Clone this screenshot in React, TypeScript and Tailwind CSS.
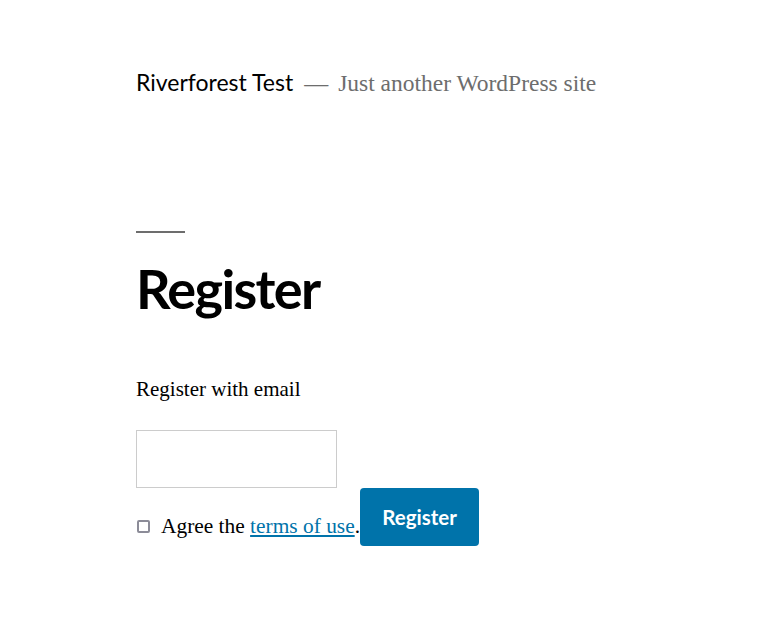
import React from "react";

export default function App() {
  return (
    <div className="min-h-[633px] bg-white pl-[136px]">
      <header className="flex items-baseline pt-[66px]">
        <span
          className="text-[23px] text-[#000] leading-[32px]"
          style={{ fontFamily: "Lato, 'Open Sans', sans-serif" }}
        >
          Riverforest Test
        </span>
        <span
          className="ml-[11px] text-[24px] text-[#6d6d6d] leading-[32px]"
          style={{ fontFamily: "'Liberation Serif', serif" }}
        >
          —
        </span>
        <span
          className="ml-[10px] text-[23.5px] text-[#6d6d6d] leading-[32px]"
          style={{ fontFamily: "'Liberation Serif', serif" }}
        >
          Just another WordPress site
        </span>
      </header>

      <div className="mt-[132px] h-[2px] w-[49px] bg-[#6d6d6d]" />

      <h1
        className="mt-[24px] text-[54px] font-bold leading-[64px] tracking-[-0.03em] text-[#000]"
        style={{ fontFamily: "Lato, 'Open Sans', sans-serif" }}
      >
        Register
      </h1>

      <p
        className="mt-[54px] text-[21px] leading-[28px] text-[#000]"
        style={{ fontFamily: "'Liberation Serif', serif" }}
      >
        Register with email
      </p>

      <input
        type="email"
        aria-label="Email"
        className="mt-[27px] block h-[58px] w-[201px] border border-[#cccccc] bg-white outline-none"
      />

      <div className="flex items-end">
        <label
          className="mb-[8px] flex items-center text-[21.4px] leading-[24px] text-[#000]"
          style={{ fontFamily: "'Liberation Serif', serif" }}
        >
          <span className="ml-[1px] mr-[11px] inline-block h-[13px] w-[13px] rounded-[2px] border-2 border-[#8c8c98]" />
          <span>
            Agree the{" "}
            <a href="#" className="text-[#0073aa] underline">
              terms of use
            </a>
            .
          </span>
        </label>
        <button
          className="h-[58px] w-[119px] rounded-[4px] bg-[#0073aa] text-[20.5px] font-bold text-white"
          style={{ fontFamily: "Lato, 'Open Sans', sans-serif" }}
        >
          Register
        </button>
      </div>
    </div>
  );
}
